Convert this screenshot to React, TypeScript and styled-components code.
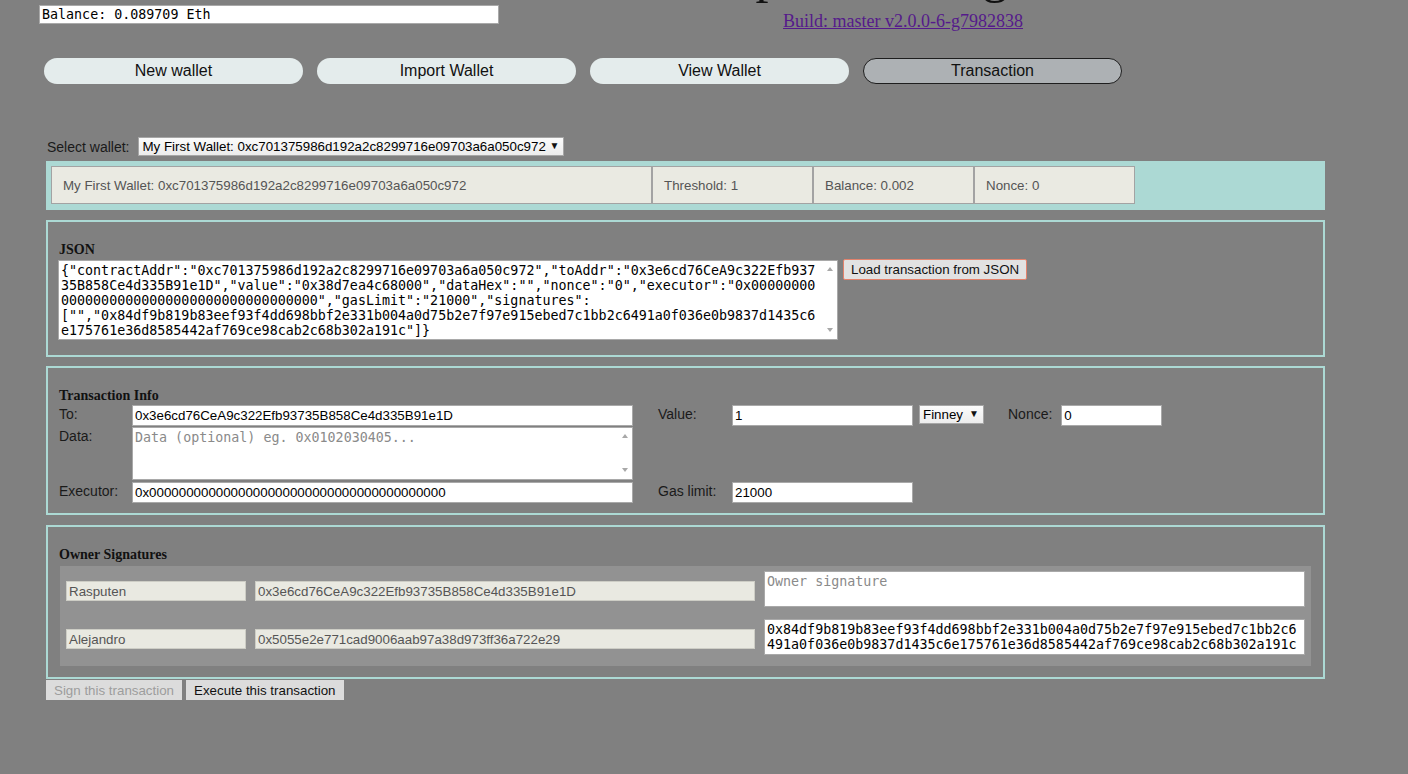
import React from "react";
import styled, { createGlobalStyle } from "styled-components";

const GlobalStyle = createGlobalStyle`
  html, body { margin: 0; padding: 0; background: #808080; }
  body { font-family: "Liberation Sans", Arial, sans-serif; color: #111; }
  * { box-sizing: border-box; }
`;

const Page = styled.div`
  width: 1408px;
  height: 774px;
  overflow: hidden;
`;

const Header = styled.header`
  display: flex;
  align-items: flex-start;
  height: 58px;
`;

const BalanceBox = styled.input`
  margin: 5px 0 0 39px;
  width: 460px;
  height: 19px;
  padding: 0 2px;
  border: 1px solid #a9a9a9;
  background: #fff;
  color: #000;
  font: 13.33px/15px "DejaVu Sans Mono", monospace;
`;

const TitleBlock = styled.div`
  width: 808px;
  text-align: center;
`;

const Title = styled.h1`
  margin: -51px 0 0;
  padding-right: 126px;
  font: 52px/52px "Liberation Serif", "Times New Roman", serif;
  color: #111;
`;

const BuildLink = styled.a`
  display: inline-block;
  margin-top: 10px;
  font: 18px "Liberation Serif", "Times New Roman", serif;
  color: #551a8b;
  text-decoration: underline;
`;

const Nav = styled.nav`
  display: flex;
  gap: 14px;
  padding-left: 44px;
`;

const NavButton = styled.button<{ $active?: boolean }>`
  width: 259px;
  height: 26px;
  border-radius: 13px;
  border: 1px solid ${(p) => (p.$active ? "#1e1e1e" : "transparent")};
  background: ${(p) => (p.$active ? "#adb1b4" : "#e4ecec")};
  color: #111;
  font: 16px "Liberation Sans", Arial, sans-serif;
  padding: 0;
`;

const Main = styled.main`
  width: 1279px;
  margin-left: 46px;
`;

const SelectRow = styled.div`
  display: flex;
  align-items: center;
  margin-top: 53px;
  height: 19px;
`;

const FieldLabel = styled.label`
  font: 14px/16px "Liberation Sans", Arial, sans-serif;
  color: #1a1a1a;
`;

const SelectLabel = styled(FieldLabel)`
  margin: 0 9px 0 1px;
`;

const SelectWrap = styled.div<{ $w: number }>`
  position: relative;
  width: ${(p) => p.$w}px;
  height: 19px;
`;

const NativeSelect = styled.select`
  appearance: none;
  width: 100%;
  height: 100%;
  margin: 0;
  padding: 0 14px 0 3px;
  border: 1px solid #a6a6a6;
  border-radius: 0;
  background: linear-gradient(#fbfbfb, #ececec);
  color: #000;
  font: 13.33px "Liberation Sans", Arial, sans-serif;
`;

const Arrow = styled.span`
  position: absolute;
  right: 5px;
  top: 4px;
  font-size: 10px;
  line-height: 10px;
  color: #111;
  pointer-events: none;
`;

const WalletBar = styled.div`
  display: flex;
  margin-top: 5px;
  padding: 5px 5px 6px;
  background: #acd9d4;
`;

const InfoCell = styled.div<{ $w: number }>`
  display: flex;
  align-items: center;
  width: ${(p) => p.$w}px;
  height: 38px;
  padding-left: 11px;
  background: #eaeae2;
  border: 1px solid #a3a3a3;
  color: #555;
  font: 13.33px "Liberation Sans", Arial, sans-serif;
`;

const Section = styled.section<{ $pb: number; $mt?: number }>`
  margin-top: ${(p) => p.$mt ?? 10}px;
  border: 2px solid #acd9d4;
  padding: 20px 10px ${(p) => p.$pb}px;
`;

const SectionTitle = styled.h5<{ $gap: number }>`
  margin: 0 0 ${(p) => p.$gap}px 1px;
  font: bold 14px/16px "Liberation Serif", "Times New Roman", serif;
  color: #111;
`;

const JsonRow = styled.div`
  display: flex;
  align-items: flex-start;
  gap: 5px;
`;

const ScrollWrap = styled.div`
  position: relative;
`;

const ScrollArrow = styled.span<{ $dir: "up" | "down" }>`
  position: absolute;
  right: 5px;
  ${(p) => (p.$dir === "up" ? "top: 7px;" : "bottom: 8px;")}
  width: 0;
  height: 0;
  border-left: 3.5px solid transparent;
  border-right: 3.5px solid transparent;
  ${(p) =>
    p.$dir === "up"
      ? "border-bottom: 4px solid #a8a8a8;"
      : "border-top: 4px solid #a8a8a8;"}
  pointer-events: none;
`;

const MonoArea = styled.textarea<{ $w: number; $h: number; $scroll?: boolean }>`
  display: block;
  width: ${(p) => p.$w}px;
  height: ${(p) => p.$h}px;
  margin: 0;
  padding: 2px ${(p) => (p.$scroll ? 17 : 2)}px 2px 2px;
  border: 1px solid #a9a9a9;
  background: #fff;
  color: #000;
  font: 13.33px/15px "DejaVu Sans Mono", monospace;
  resize: none;
  overflow: hidden;
  &::placeholder { color: #8a8a8a; }
`;

const LoadButton = styled.button`
  height: 21px;
  margin-top: -1px;
  padding: 0 7px;
  border: 1px solid #e3826c;
  border-radius: 2px;
  background: #e2e2e2;
  color: #111;
  font: 13.33px "Liberation Sans", Arial, sans-serif;
`;

const TxGrid = styled.div`
  display: grid;
  grid-template-columns: 74px 501px 99px 1fr;
  grid-template-rows: 21px 54px 21px;
  row-gap: 1px;
  align-items: start;
`;

const GridLabel = styled(FieldLabel)<{ $indent?: number }>`
  padding-left: ${(p) => p.$indent ?? 1}px;
  padding-top: 1px;
`;

const TextInput = styled.input<{ $w: number }>`
  width: ${(p) => p.$w}px;
  height: 21px;
  margin: 0;
  padding: 1px 2px;
  border: 1px solid #a9a9a9;
  background: #fff;
  color: #000;
  font: 13.33px "Liberation Sans", Arial, sans-serif;
`;

const ValueCell = styled.div`
  display: flex;
  align-items: flex-start;
`;

const UnitWrap = styled.div`
  margin-left: 6px;
`;

const NonceLabel = styled(FieldLabel)`
  margin: 1px 9px 0 24px;
`;

const OwnerPanel = styled.div`
  display: flex;
  flex-direction: column;
  gap: 12px;
  margin: 0 2px;
  padding: 5px 6px 11px;
  background: #929292;
`;

const SigRow = styled.div`
  display: flex;
  align-items: flex-start;
  gap: 9px;
`;

const OwnerCell = styled.div<{ $w: number }>`
  display: flex;
  align-items: center;
  width: ${(p) => p.$w}px;
  height: 20px;
  margin-top: 10px;
  padding-left: 2px;
  background: #e9e9e1;
  border: 1px solid #cdcdc5;
  color: #555;
  font: 13.33px "Liberation Sans", Arial, sans-serif;
`;

const Actions = styled.div`
  display: flex;
  gap: 4px;
  margin-top: 1px;
`;

const ActionButton = styled.button<{ $disabled?: boolean }>`
  height: 20px;
  padding: 0 8px;
  border: none;
  background: #dcdcdc;
  color: ${(p) => (p.$disabled ? "#9d9d9d" : "#111")};
  font: 13.33px "Liberation Sans", Arial, sans-serif;
`;

const WALLET = "My First Wallet: 0xc701375986d192a2c8299716e09703a6a050c972";
const JSON_TEXT =
  '{"contractAddr":"0xc701375986d192a2c8299716e09703a6a050c972","toAddr":"0x3e6cd76CeA9c322Efb93735B858Ce4d335B91e1D","value":"0x38d7ea4c68000","dataHex":"","nonce":"0","executor":"0x0000000000000000000000000000000000000000","gasLimit":"21000","signatures":["","0x84df9b819b83eef93f4dd698bbf2e331b004a0d75b2e7f97e915ebed7c1bb2c6491a0f036e0b9837d1435c6e175761e36d8585442af769ce98cab2c68b302a191c"]}';
const SIG =
  "0x84df9b819b83eef93f4dd698bbf2e331b004a0d75b2e7f97e915ebed7c1bb2c6491a0f036e0b9837d1435c6e175761e36d8585442af769ce98cab2c68b302a191c";

const owners = [
  { name: "Rasputen", addr: "0x3e6cd76CeA9c322Efb93735B858Ce4d335B91e1D", sig: "" },
  { name: "Alejandro", addr: "0x5055e2e771cad9006aab97a38d973ff36a722e29", sig: SIG },
];

export default function App() {
  return (
    <Page>
      <GlobalStyle />
      <Header>
        <BalanceBox readOnly value="Balance: 0.089709 Eth" />
        <TitleBlock>
          <Title>Simple Multisig</Title>
          <BuildLink href="#">Build: master v2.0.0-6-g7982838</BuildLink>
        </TitleBlock>
      </Header>
      <Nav>
        <NavButton>New wallet</NavButton>
        <NavButton>Import Wallet</NavButton>
        <NavButton>View Wallet</NavButton>
        <NavButton $active>Transaction</NavButton>
      </Nav>
      <Main>
        <SelectRow>
          <SelectLabel>Select wallet:</SelectLabel>
          <SelectWrap $w={426}>
            <NativeSelect defaultValue="w1">
              <option value="w1">{WALLET}</option>
            </NativeSelect>
            <Arrow>▼</Arrow>
          </SelectWrap>
        </SelectRow>
        <WalletBar>
          <InfoCell $w={601}>{WALLET}</InfoCell>
          <InfoCell $w={161}>Threshold: 1</InfoCell>
          <InfoCell $w={161}>Balance: 0.002</InfoCell>
          <InfoCell $w={161}>Nonce: 0</InfoCell>
        </WalletBar>

        <Section $pb={15}>
          <SectionTitle $gap={2}>JSON</SectionTitle>
          <JsonRow>
            <ScrollWrap>
              <MonoArea $w={780} $h={80} $scroll readOnly value={JSON_TEXT} />
              <ScrollArrow $dir="up" />
              <ScrollArrow $dir="down" />
            </ScrollWrap>
            <LoadButton>Load transaction from JSON</LoadButton>
          </JsonRow>
        </Section>

        <Section $pb={10} $mt={9}>
          <SectionTitle $gap={1}>Transaction Info</SectionTitle>
          <TxGrid>
            <GridLabel>To:</GridLabel>
            <TextInput $w={501} readOnly value="0x3e6cd76CeA9c322Efb93735B858Ce4d335B91e1D" />
            <GridLabel $indent={25}>Value:</GridLabel>
            <ValueCell>
              <TextInput $w={181} readOnly value="1" />
              <UnitWrap>
                <SelectWrap $w={65}>
                  <NativeSelect defaultValue="finney">
                    <option value="finney">Finney</option>
                  </NativeSelect>
                  <Arrow>▼</Arrow>
                </SelectWrap>
              </UnitWrap>
              <NonceLabel>Nonce:</NonceLabel>
              <TextInput $w={101} readOnly value="0" />
            </ValueCell>

            <GridLabel>Data:</GridLabel>
            <ScrollWrap>
              <MonoArea $w={501} $h={53} $scroll placeholder="Data (optional) eg. 0x0102030405..." />
              <ScrollArrow $dir="up" />
              <ScrollArrow $dir="down" />
            </ScrollWrap>
            <span />
            <span />

            <GridLabel>Executor:</GridLabel>
            <TextInput $w={501} readOnly value="0x0000000000000000000000000000000000000000" />
            <GridLabel $indent={25}>Gas limit:</GridLabel>
            <TextInput $w={181} readOnly value="21000" />
          </TxGrid>
        </Section>

        <Section $pb={11}>
          <SectionTitle $gap={3}>Owner Signatures</SectionTitle>
          <OwnerPanel>
            {owners.map((o) => (
              <SigRow key={o.name}>
                <OwnerCell $w={180}>{o.name}</OwnerCell>
                <OwnerCell $w={500}>{o.addr}</OwnerCell>
                <MonoArea $w={541} $h={36} placeholder="Owner signature" readOnly value={o.sig} />
              </SigRow>
            ))}
          </OwnerPanel>
        </Section>

        <Actions>
          <ActionButton $disabled>Sign this transaction</ActionButton>
          <ActionButton>Execute this transaction</ActionButton>
        </Actions>
      </Main>
    </Page>
  );
}
